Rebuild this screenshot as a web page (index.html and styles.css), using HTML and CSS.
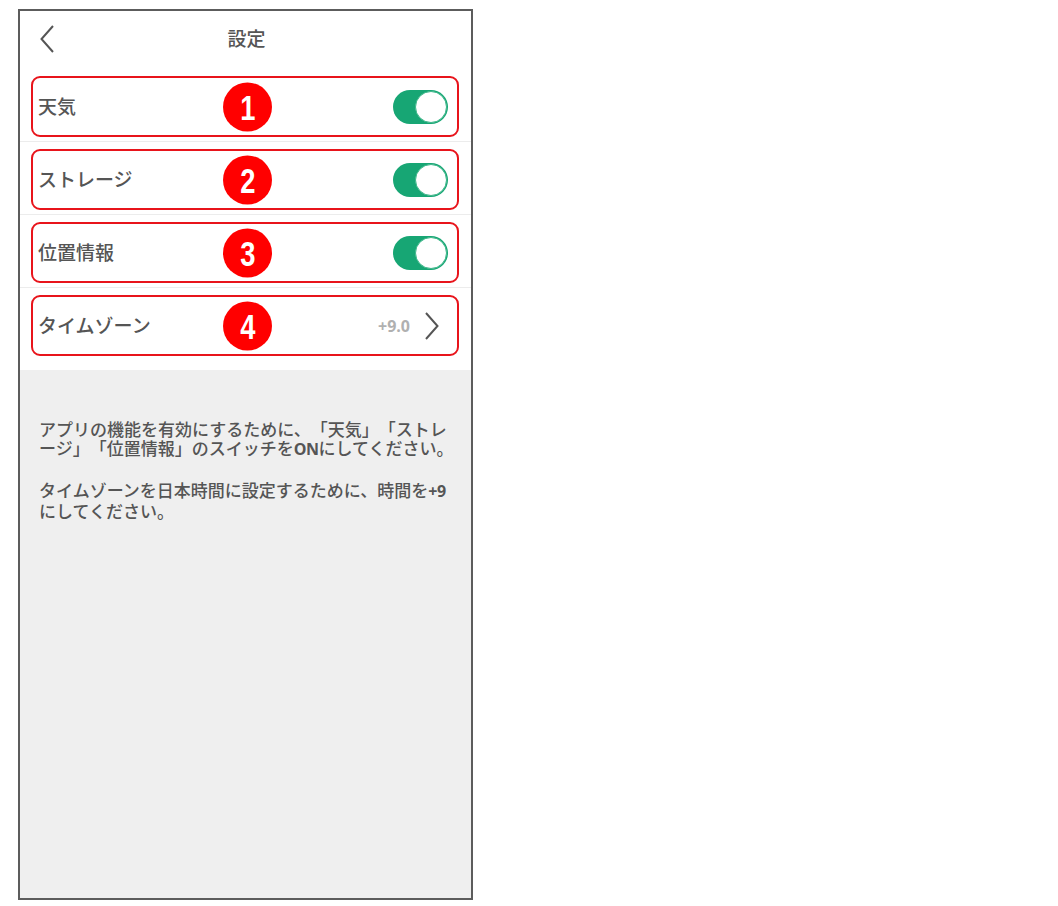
FILE: index.html
```html
<!DOCTYPE html>
<html lang="ja">
<head>
<meta charset="utf-8">
<title>設定</title>
<link rel="stylesheet" href="styles.css">
</head>
<body>
<div class="phone">
  <header class="topbar">
    <svg class="back" viewBox="0 0 16 30" width="16" height="30"><path d="M14 2 L2.5 15 L14 28" fill="none" stroke="#555" stroke-width="2"/></svg>
    <h1 class="title">設定</h1>
  </header>
  <ul class="list">
    <li class="row">
      <div class="box">
        <span class="label">天気</span>
        <span class="badge"><span class="num">1</span></span>
        <span class="toggle"><span class="knob"></span></span>
      </div>
    </li>
    <li class="row">
      <div class="box">
        <span class="label">ストレージ</span>
        <span class="badge"><span class="num">2</span></span>
        <span class="toggle"><span class="knob"></span></span>
      </div>
    </li>
    <li class="row">
      <div class="box">
        <span class="label">位置情報</span>
        <span class="badge"><span class="num">3</span></span>
        <span class="toggle"><span class="knob"></span></span>
      </div>
    </li>
    <li class="row last">
      <div class="box">
        <span class="label">タイムゾーン</span>
        <span class="badge"><span class="num">4</span></span>
        <span class="value">+9.0</span>
        <svg class="chev" viewBox="0 0 16 30" width="16" height="30"><path d="M2 2 L13.5 15 L2 28" fill="none" stroke="#555" stroke-width="2"/></svg>
      </div>
    </li>
  </ul>
  <section class="notes">
    <p>アプリの機能を有効にするために、「天気」「ストレージ」「位置情報」のスイッチを<b>ON</b>にしてください。</p>
    <p>タイムゾーンを日本時間に設定するために、時間を<b>+9</b>にしてください。</p>
  </section>
</div>
</body>
</html>
```

FILE: styles.css
```css
html, body {
  margin: 0;
  padding: 0;
  background: #fff;
}
body {
  font-family: "Noto Sans CJK JP", "Noto Sans", sans-serif;
  color: #555;
}
.phone {
  margin: 9px 0 0 18px;
  width: 455px;
  height: 891px;
  box-sizing: border-box;
  border: 2px solid #5c5c5c;
  display: flex;
  flex-direction: column;
  background: #fff;
}
.topbar {
  height: 58px;
  flex: none;
  display: flex;
  align-items: center;
  justify-content: center;
  position: relative;
}
.back {
  position: absolute;
  left: 19px;
  top: 13px;
}
.title {
  margin: 0 0 6px 0;
  font-size: 19px;
  font-weight: 500;
  color: #555;
  line-height: 1;
  padding-left: 2px;
}
.list {
  list-style: none;
  margin: 0;
  padding: 0 0 10px 0;
  background: #fff;
  flex: none;
}
.row {
  padding: 7px 12px 4px 11px;
  border-bottom: 1px solid #ececec;
}
.row.last {
  border-bottom: none;
}
.box {
  height: 61px;
  box-sizing: border-box;
  border: 2px solid #e8141b;
  border-radius: 9px;
  display: flex;
  align-items: center;
  padding: 0 9px 0 5px;
  position: relative;
}
.label {
  font-size: 19px;
  font-weight: 500;
  color: #555;
  flex: 1;
  line-height: 1;
  margin-top: -3px;
}
.badge {
  position: absolute;
  left: 190px;
  top: 50%;
  transform: translateY(-50%);
  width: 49px;
  height: 49px;
  border-radius: 50%;
  background: #f00;
  display: flex;
  align-items: center;
  justify-content: center;
}
.num {
  color: #fff;
  font-family: "Liberation Sans", Arial, sans-serif;
  font-weight: 700;
  font-size: 35px;
  line-height: 1;
  transform: scaleX(0.78);
  margin-top: 1px;
}
.toggle {
  width: 55px;
  height: 34px;
  border-radius: 17px;
  background: #17a674;
  display: flex;
  align-items: center;
  justify-content: flex-end;
  padding: 0 1px;
  box-sizing: border-box;
}
.knob {
  width: 32px;
  height: 32px;
  border-radius: 50%;
  background: #fff;
  border: 1px solid #3eb78a;
  box-sizing: border-box;
}
.value {
  font-family: "Open Sans", "Noto Sans", sans-serif;
  font-weight: 700;
  font-size: 16px;
  color: #b0b0b0;
  margin-right: 14px;
}
.chev {
  margin-right: 8px;
}
.notes {
  flex: 1;
  background: #efefef;
  padding: 49px 16px 0 19px;
}
.notes p {
  margin: 0 0 21px 0;
  font-size: 17px;
  font-weight: 500;
  line-height: 19px;
  color: #555;
  line-break: loose;
  text-spacing-trim: space-all;
}
.notes b {
  font-family: "Open Sans", "Noto Sans", sans-serif;
  font-weight: 700;
  font-size: 16px;
  letter-spacing: -0.5px;
}
```
